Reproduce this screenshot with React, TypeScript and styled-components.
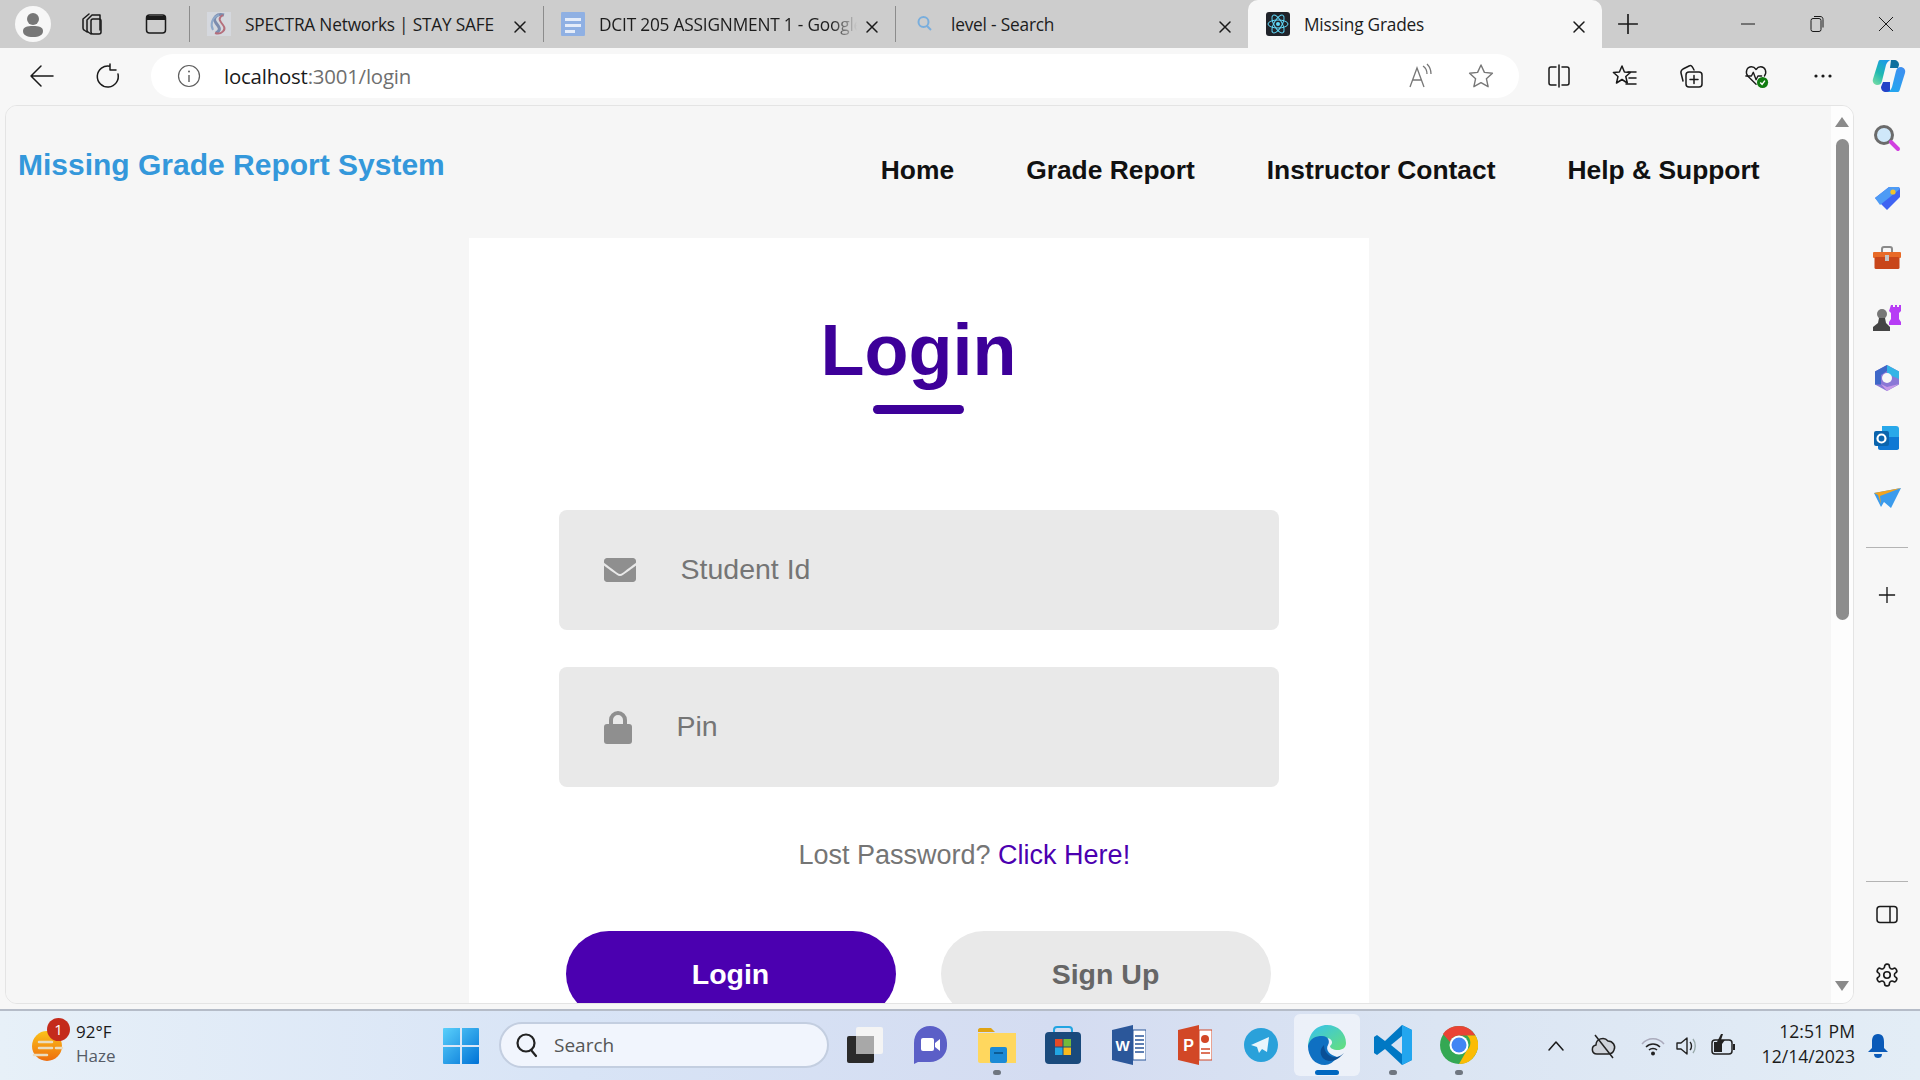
import React from "react";
import styled, { createGlobalStyle } from "styled-components";
import { FaEnvelope } from "react-icons/fa";

const GlobalStyle = createGlobalStyle`
  html, body {
    margin: 0;
    padding: 0;
    overflow: hidden;
  }
  body {
    font-family: "Open Sans", "Noto Sans", sans-serif;
  }
`;

const Screen = styled.div`
  width: 1920px;
  height: 1080px;
  display: flex;
  flex-direction: column;
  overflow: hidden;
  background: #f7f7f7;
`;

/* browser tab strip */
const TabStrip = styled.div`
  height: 48px;
  flex: none;
  display: flex;
  align-items: center;
  background: #cdcdcd;
  padding-left: 15px;
`;

const ProfileBadge = styled.div`
  width: 36px;
  height: 36px;
  border-radius: 50%;
  background: #f7f7f7;
  display: flex;
  align-items: center;
  justify-content: center;
  flex: none;
`;

const StripButton = styled.div<{ $left: number }>`
  margin-left: ${(p) => p.$left}px;
  width: 26px;
  height: 26px;
  flex: none;
  display: flex;
  align-items: center;
  justify-content: center;
`;

const TabList = styled.div`
  margin-left: 20px;
  display: flex;
  height: 48px;
  align-items: center;
  flex: none;
`;

const Tab = styled.div<{ $width: number; $active?: boolean; $divider?: boolean }>`
  width: ${(p) => p.$width}px;
  height: ${(p) => (p.$active ? "48px" : "36px")};
  display: flex;
  align-items: center;
  padding: 0 16px 0 17px;
  box-sizing: border-box;
  flex: none;
  background: ${(p) => (p.$active ? "#f7f7f7" : "transparent")};
  border-radius: ${(p) => (p.$active ? "10px 10px 0 0" : "0")};
  border-left: ${(p) => (p.$divider ? "1px solid #8c8c8c" : "1px solid transparent")};
`;

const TabIcon = styled.div`
  width: 24px;
  height: 24px;
  flex: none;
  display: flex;
  align-items: center;
  justify-content: center;
`;

const TabTitle = styled.span<{ $fade?: boolean }>`
  margin-left: 14px;
  flex: 1;
  min-width: 0;
  font-size: 17.3px;
  letter-spacing: -0.2px;
  color: #1c1c1c;
  white-space: nowrap;
  overflow: hidden;
  mask-image: ${(p) => (p.$fade ? "linear-gradient(to right, #000 90%, transparent)" : "none")};
`;

const TabClose = styled.div`
  width: 14px;
  height: 14px;
  flex: none;
  margin-left: 8px;
`;

const WindowControls = styled.div`
  margin-left: auto;
  display: flex;
  align-items: center;
  height: 48px;
`;

const WindowButton = styled.div`
  width: 69px;
  display: flex;
  justify-content: center;
  align-items: center;
`;

/* toolbar with the address bar */
const ToolBar = styled.div`
  height: 57px;
  flex: none;
  display: flex;
  align-items: center;
  padding-bottom: 2px;
  box-sizing: border-box;
  background: #f7f7f7;
`;

const NavButton = styled.div<{ $left: number }>`
  margin-left: ${(p) => p.$left}px;
  width: 28px;
  height: 28px;
  flex: none;
  display: flex;
  align-items: center;
  justify-content: center;
`;

const AddressBar = styled.div`
  margin-left: 29px;
  width: 1368px;
  height: 44px;
  background: #ffffff;
  border-radius: 22px;
  display: flex;
  align-items: center;
  padding: 0 25px 0 26px;
  box-sizing: border-box;
  flex: none;
`;

const Url = styled.span`
  margin-left: 23px;
  font-size: 20.4px;
  letter-spacing: -0.2px;
  color: #1a1a1a;
  flex: 1;
`;

const UrlRest = styled.span`
  color: #6f6f6f;
`;

const AddressActions = styled.div`
  display: flex;
  gap: 34px;
  align-items: center;
`;

const ToolIcons = styled.div`
  margin-left: 27px;
  display: flex;
  align-items: center;
  gap: 40px;
`;

const ToolIcon = styled.div`
  width: 26px;
  height: 26px;
  flex: none;
  display: flex;
  align-items: center;
  justify-content: center;
`;

/* page area and browser sidebar */
const Middle = styled.div`
  height: 899px;
  flex: none;
  display: flex;
  background: #f7f7f7;
`;

const Viewport = styled.div`
  margin-left: 5px;
  width: 1849px;
  height: 899px;
  box-sizing: border-box;
  flex: none;
  display: flex;
  overflow: hidden;
  border: 1px solid #e4e4e4;
  border-radius: 12px;
`;

const Page = styled.div`
  flex: 1;
  min-width: 0;
  background: #f6f6f6;
  font-family: "Liberation Sans", Arial, sans-serif;
`;

const SiteHeader = styled.header`
  height: 132px;
  display: flex;
  align-items: flex-start;
  padding-left: 12px;
`;

const SiteLogo = styled.div`
  margin-top: 39px;
  font-size: 30px;
  line-height: 40px;
  font-weight: 700;
  color: #3498db;
  white-space: nowrap;
`;

const SiteNav = styled.nav`
  margin-left: 436px;
  margin-top: 46px;
  display: flex;
  gap: 72px;
`;

const SiteLink = styled.a`
  font-size: 26.4px;
  line-height: 36px;
  font-weight: 700;
  color: #111111;
  white-space: nowrap;
`;

const Card = styled.main`
  width: 900px;
  height: 900px;
  margin: 0 auto;
  background: #ffffff;
  padding: 74px 90px 0;
  box-sizing: border-box;
`;

const Title = styled.h1`
  margin: 0;
  text-align: center;
  font-size: 72px;
  line-height: 76px;
  font-weight: 700;
  color: #3d0099;
`;

const TitleRule = styled.div`
  width: 91px;
  height: 9px;
  margin: 17px auto 0;
  background: #3d0099;
  border-radius: 5px;
`;

const Field = styled.label<{ $top: number }>`
  margin-top: ${(p) => p.$top}px;
  height: 120px;
  background: #e9e9e9;
  border-radius: 8px;
  display: flex;
  align-items: center;
  padding-left: 45px;
  color: #8f8f8f;
`;

const FieldIcon = styled.span<{ $gap: number }>`
  display: flex;
  margin-right: ${(p) => p.$gap}px;
`;

const FieldInput = styled.input`
  flex: 1;
  min-width: 0;
  border: 0;
  outline: 0;
  background: transparent;
  padding: 0;
  margin-top: -1px;
  font-family: inherit;
  font-size: 28.5px;
  color: #333333;
  &::placeholder {
    color: #757575;
    opacity: 1;
  }
`;

const LostPassword = styled.p`
  margin: 50px 0 0 240px;
  font-size: 27px;
  line-height: 36px;
  color: #757575;
  white-space: nowrap;
`;

const LostLink = styled.a`
  color: #4b00b0;
`;

const ButtonRow = styled.div`
  margin: 58px 8px 0 7px;
  display: flex;
  justify-content: space-between;
`;

const PillButton = styled.button<{ $primary?: boolean }>`
  width: 330px;
  height: 86px;
  border: 0;
  border-radius: 60px;
  font-family: inherit;
  font-size: 28.5px;
  font-weight: 700;
  background: ${(p) => (p.$primary ? "#4b00b0" : "#e9e9e9")};
  color: ${(p) => (p.$primary ? "#ffffff" : "#666666")};
`;

const ScrollTrack = styled.div`
  width: 22px;
  flex: none;
  background: #fdfdfd;
  display: flex;
  flex-direction: column;
  align-items: center;
`;

const ArrowUp = styled.div`
  margin-top: 11px;
  border-left: 7px solid transparent;
  border-right: 7px solid transparent;
  border-bottom: 10px solid #8a8a8a;
`;

const ScrollThumb = styled.div`
  margin-top: 12px;
  width: 13px;
  height: 481px;
  border-radius: 7px;
  background: #8d8d8d;
`;

const ArrowDown = styled.div`
  margin-top: auto;
  margin-bottom: 12px;
  border-left: 7px solid transparent;
  border-right: 7px solid transparent;
  border-top: 10px solid #8a8a8a;
`;

const Sidebar = styled.aside`
  width: 66px;
  flex: none;
  display: flex;
  flex-direction: column;
  align-items: center;
  padding-top: 19px;
  box-sizing: border-box;
`;

const SideIcon = styled.div`
  width: 28px;
  height: 28px;
  margin-bottom: 32px;
  flex: none;
  display: flex;
  align-items: center;
  justify-content: center;
`;

const SideRule = styled.div<{ $top: number; $bottom: number }>`
  width: 42px;
  height: 1px;
  background: #b4b4b4;
  flex: none;
  margin-top: ${(p) => p.$top}px;
  margin-bottom: ${(p) => p.$bottom}px;
`;

const SideBottom = styled.div`
  margin-top: auto;
  margin-bottom: -17px;
  padding-bottom: 0;
  display: flex;
  flex-direction: column;
  align-items: center;
`;

const Gap = styled.div`
  height: 5px;
  flex: none;
  background: #f7f7f7;
`;

/* windows taskbar */
const Taskbar = styled.footer`
  height: 71px;
  flex: none;
  border-top: 2px solid #b5bcc8;
  box-sizing: border-box;
  background: linear-gradient(90deg, #e7f0f8 0%, #d8e4f6 30%, #d4dcf1 55%, #dbe5f3 75%, #e3edf6 100%);
  display: flex;
  align-items: center;
`;

const Weather = styled.div`
  width: 440px;
  margin-left: 28px;
  flex: none;
  display: flex;
  align-items: center;
`;

const WeatherIcon = styled.div`
  position: relative;
  width: 36px;
  height: 40px;
  flex: none;
`;

const AlertBadge = styled.span`
  position: absolute;
  top: -8px;
  right: -6px;
  width: 23px;
  height: 23px;
  border-radius: 50%;
  background: #c42b1c;
  color: #fff;
  font-size: 15px;
  line-height: 23px;
  text-align: center;
`;

const WeatherText = styled.div`
  margin-left: 12px;
  margin-top: -4px;
  font-size: 17px;
  line-height: 24px;
  color: #1b1b1b;
`;

const WeatherSub = styled.div`
  color: #555b66;
`;

const StartSlot = styled.div`
  margin-left: -25px;
  width: 36px;
  height: 36px;
  flex: none;
`;

const SearchPill = styled.div`
  margin-left: 20px;
  margin-top: -2px;
  width: 330px;
  height: 46px;
  box-sizing: border-box;
  background: #f1f5fd;
  border: 2px solid #c3cee0;
  border-radius: 23px;
  display: flex;
  align-items: center;
  padding-left: 14px;
  flex: none;
`;

const SearchLabel = styled.span`
  margin-left: 15px;
  font-size: 19px;
  color: #555;
`;

const AppRow = styled.div`
  margin-left: 5px;
  margin-top: -2px;
  display: flex;
  align-items: center;
  flex: none;
`;

const AppSlot = styled.div<{ $active?: boolean; $width?: number }>`
  position: relative;
  width: ${(p) => p.$width ?? 66}px;
  height: 62px;
  display: flex;
  align-items: center;
  justify-content: center;
  border-radius: 6px;
  background: ${(p) => (p.$active ? "rgba(255,255,255,0.5)" : "transparent")};
`;

const AppDot = styled.span<{ $active?: boolean }>`
  position: absolute;
  bottom: 1px;
  left: 50%;
  transform: translateX(-50%);
  width: ${(p) => (p.$active ? "24px" : "8px")};
  height: 5px;
  border-radius: 3px;
  background: ${(p) => (p.$active ? "#0067c0" : "#6f7680")};
`;

const Tray = styled.div`
  margin-left: auto;
  display: flex;
  align-items: center;
  padding-right: 28px;
`;

const TrayIcon = styled.div<{ $gap: number }>`
  margin-left: ${(p) => p.$gap}px;
  width: 28px;
  height: 28px;
  display: flex;
  align-items: center;
  justify-content: center;
  flex: none;
`;

const Clock = styled.div`
  margin-left: 24px;
  margin-top: -4px;
  text-align: right;
  font-size: 17.6px;
  line-height: 25px;
  color: #1b1b1b;
  white-space: nowrap;
`;

const BellSlot = styled.div`
  margin-left: 9px;
  width: 28px;
  display: flex;
  justify-content: center;
`;

/* drawings */
const line = { fill: "none", stroke: "#1a1a1a", strokeWidth: 1.5, strokeLinecap: "round", strokeLinejoin: "round" } as const;

const CloseGlyph = () => (
  <svg width="14" height="14" viewBox="0 0 14 14">
    <path d="M2 2l10 10M12 2L2 12" {...line} />
  </svg>
);

const ProfileGlyph = () => (
  <svg width="26" height="26" viewBox="0 0 26 26">
    <circle cx="13" cy="8" r="6" fill="#777" />
    <path d="M3 20c0-4 4-5 10-5s10 1 10 5-4 6-10 6-10-2-10-6z" fill="#777" />
  </svg>
);

const WorkspacesGlyph = () => (
  <svg width="26" height="26" viewBox="0 0 26 26">
    <path d="M8 21l-3-2c-1-.6-1-1-1-2V8l6-5M12 23l-3-2c-1-.6-1-1-1-2V9l5-5h8v15" {...line} />
    <rect x="12" y="8" width="10" height="15" rx="2" {...line} />
  </svg>
);

const VerticalTabsGlyph = () => (
  <svg width="24" height="24" viewBox="0 0 24 24">
    <rect x="2.5" y="3" width="19" height="18" rx="3" {...line} />
    <path d="M3 4h18v4H3z" fill="#1a1a1a" />
  </svg>
);

const SpectraIcon = () => (
  <svg width="24" height="24" viewBox="0 0 24 24">
    <rect width="24" height="24" fill="#d5d8de" />
    <path d="M17 3c-7-2-12 3-8 8s5 7 0 10" fill="none" stroke="#7c8cae" strokeWidth="3" />
    <path d="M8 21c6 2 12-3 8-8s-5-7 0-10" fill="none" stroke="#b56f7c" strokeWidth="2" />
    <path d="M12 3C5 5 3 12 6 18" fill="none" stroke="#8fa8c9" strokeWidth="2" />
  </svg>
);

const DocsIcon = () => (
  <svg width="24" height="24" viewBox="0 0 24 24">
    <rect width="24" height="26" y="-1" rx="3" fill="#8fb0e3" />
    <path d="M4 6h16v3H4zM4 12h16v3H4zM4 18h10v3H4z" fill="#e4ecf9" />
  </svg>
);

const SearchTabIcon = () => (
  <svg width="20" height="20" viewBox="0 0 20 20">
    <circle cx="8.5" cy="8" r="5" fill="none" stroke="#79aedd" strokeWidth="2" />
    <path d="M12 12l4 4" stroke="#79aedd" strokeWidth="2" />
  </svg>
);

const ReactIcon = () => (
  <svg width="24" height="24" viewBox="0 0 24 24">
    <rect width="24" height="24" rx="3" fill="#20232a" />
    <circle cx="12" cy="12" r="2" fill="#61dafb" />
    <g fill="none" stroke="#61dafb" strokeWidth="1">
      <ellipse cx="12" cy="12" rx="10" ry="4" />
      <ellipse cx="12" cy="12" rx="10" ry="4" transform="rotate(60 12 12)" />
      <ellipse cx="12" cy="12" rx="10" ry="4" transform="rotate(120 12 12)" />
    </g>
  </svg>
);

const PlusGlyph = ({ size }: { size: number }) => (
  <svg width={size} height={size} viewBox="0 0 20 20">
    <path d="M10 1v18M1 10h18" {...line} strokeLinecap="butt" />
  </svg>
);

const MinimizeGlyph = () => (
  <svg width="16" height="16" viewBox="0 0 16 16">
    <path d="M1 8h14" stroke="#1a1a1a" strokeWidth="1" />
  </svg>
);

const RestoreGlyph = () => (
  <svg width="16" height="18" viewBox="0 0 16 18">
    <rect x="2" y="3.5" width="10" height="13" rx="2" fill="none" stroke="#1a1a1a" strokeWidth="1" />
    <path d="M5 1.5h6c2 0 3 1 3 3v8" fill="none" stroke="#1a1a1a" strokeWidth="1" />
  </svg>
);

const WindowCloseGlyph = () => (
  <svg width="16" height="16" viewBox="0 0 16 16">
    <path d="M1 1l14 14M15 1L1 15" stroke="#1a1a1a" strokeWidth="1" />
  </svg>
);

const BackGlyph = () => (
  <svg width="26" height="26" viewBox="0 0 26 26">
    <path d="M24 13H2M12 3L2 13l10 10" {...line} />
  </svg>
);

const RefreshGlyph = () => (
  <svg width="26" height="26" viewBox="0 0 26 26">
    <path d="M15 3.2A10.5 10.5 0 1 0 23 11M15 1v6h6" {...line} />
  </svg>
);

const InfoGlyph = () => (
  <svg width="24" height="24" viewBox="0 0 24 24">
    <circle cx="12" cy="12" r="10.5" fill="none" stroke="#5e5e5e" strokeWidth="1.2" />
    <path d="M12 11v7" stroke="#5e5e5e" strokeWidth="1.4" />
    <circle cx="12" cy="7.5" r="1" fill="#5e5e5e" />
  </svg>
);

const ReadAloudGlyph = () => (
  <svg width="26" height="26" viewBox="0 0 26 26">
    <path d="M2 24L9 5l7 19M5 17h8" fill="none" stroke="#777" strokeWidth="1.3" />
    <path d="M15 3c3 2 4 5 4 8M19 1c3 3 4 6 4 10" fill="none" stroke="#777" strokeWidth="1.3" />
  </svg>
);

const StarGlyph = () => (
  <svg width="26" height="26" viewBox="0 0 26 26">
    <path d="M13 2l3.4 7.4 8 .9-6 5.4 1.7 8L13 19.7l-7.1 4 1.7-8-6-5.4 8-.9z" fill="none" stroke="#777" strokeWidth="1.4" strokeLinejoin="round" />
  </svg>
);

const SplitGlyph = () => (
  <svg width="26" height="26" viewBox="0 0 26 26">
    <path d="M10 4H5c-1.5 0-2 1-2 2v14c0 1 .5 2 2 2h5M16 4h5c1.5 0 2 1 2 2v14c0 1-.5 2-2 2h-5M13 2v22" {...line} />
  </svg>
);

const FavoritesGlyph = () => (
  <svg width="26" height="26" viewBox="0 0 26 26">
    <path d="M10 3l2.4 6 6 .5-4.600 4 1.500 6.500-5.300-3.500L4.500 20 6 13.500l-4.600-4 6-.5z" {...line} />
    <path d="M16 9h8M17 15h7M14 21h10" {...line} />
  </svg>
);

const CollectionsGlyph = () => (
  <svg width="26" height="26" viewBox="0 0 26 26">
    <path d="M5 18L3 10c-.5-2 .5-3 2-4l6-3c2-1 3 0 4 2l1 2" {...line} />
    <rect x="8" y="9" width="16" height="15" rx="3" {...line} />
    <path d="M16 12.500v8M12 16.500h8" {...line} />
  </svg>
);

const HealthGlyph = () => (
  <svg width="28" height="28" viewBox="0 0 28 28">
    <path d="M13 23L4 14C1 10 3 4 8 4c3 0 5 3 5 3s2-3 5-3c5 0 7 6 4 10" {...line} />
    <path d="M2 14h6l2-4 3 8 2-4h4" {...line} />
    <circle cx="20" cy="21" r="6" fill="#107c10" />
    <path d="M17.500 21l2 2 3-4" fill="none" stroke="#fff" strokeWidth="1.5" />
  </svg>
);

const MoreGlyph = () => (
  <svg width="22" height="6" viewBox="0 0 22 6">
    <circle cx="4" cy="3" r="1.6" fill="#1a1a1a" />
    <circle cx="11" cy="3" r="1.6" fill="#1a1a1a" />
    <circle cx="18" cy="3" r="1.6" fill="#1a1a1a" />
  </svg>
);

const CopilotGlyph = () => (
  <svg width="34" height="34" viewBox="0 0 34 34" style={{ flex: "none" }}>
    <defs>
      <linearGradient id="cpLeft" x1="0" y1="1" x2="0.6" y2="0">
        <stop offset="0" stopColor="#7fe0a4" />
        <stop offset="0.5" stopColor="#20b9b0" />
        <stop offset="1" stopColor="#1c9be6" />
      </linearGradient>
      <linearGradient id="cpRight" x1="0.8" y1="0" x2="0.2" y2="1">
        <stop offset="0" stopColor="#3f8ff0" />
        <stop offset="1" stopColor="#21a8ef" />
      </linearGradient>
    </defs>
    <path d="M19 1h3c3 0 5 2 5 5l-1 3h-8z" fill="#0f6f9e" />
    <path d="M8 1h12c-3 0-5 2-6 5l-4 16c-1 3-2 4-5 4-3-.5-5-3-4-6L6 4c.5-2 1-3 2-3z" fill="url(#cpLeft)" />
    <path d="M9 28l2-5h7v10h-4c-3 0-5-2-5-5z" fill="#2443c8" />
    <path d="M26 33H14c3 0 5-2 6-5l4-16c1-3 2-4 5-4 3 .5 5 3 4 6l-5 16c-.5 2-1 3-2 3z" fill="url(#cpRight)" />
  </svg>
);

const MagnifierSide = () => (
  <svg width="28" height="28" viewBox="0 0 28 28">
    <circle cx="11" cy="11" r="8.5" fill="#cfe8fa" stroke="#6b6b6b" strokeWidth="3" />
    <path d="M18 18l7 7" stroke="#d13fe0" strokeWidth="4" strokeLinecap="round" />
  </svg>
);

const TagSide = () => (
  <svg width="26" height="26" viewBox="0 0 26 26">
    <path d="M15 2h9c1 0 2 1 2 2v8L13 25 1 13z" fill="#3f63f2" />
    <path d="M15 2h9c1 0 2 1 2 2L6 20l-5-7z" fill="#4e9bf5" />
    <circle cx="19" cy="7" r="2.6" fill="#f4c32a" />
  </svg>
);

const ToolboxSide = () => (
  <svg width="28" height="24" viewBox="0 0 28 24">
    <path d="M9 6V3c0-1 1-2 2-2h6c1 0 2 1 2 2v3" fill="none" stroke="#8a8a8a" strokeWidth="2" />
    <rect y="6" width="28" height="6" rx="1" fill="#e86a27" />
    <rect x="1.5" y="11" width="25" height="12" rx="1.5" fill="#c8461a" />
    <rect x="12" y="9" width="4" height="6" fill="#c4c4c4" />
  </svg>
);

const ChessSide = () => (
  <svg width="28" height="28" viewBox="0 0 28 28">
    <path d="M18 1h2v2h2V1h2v2h2V1h2v6l-2 2v6l2 3v3H16v-3l2-3V9l-2-2z" fill="#b73cf5" />
    <circle cx="9" cy="10" r="5" fill="#777" />
    <path d="M6 14h6l1 5 4 4v4H0v-4l5-4z" fill="#444" />
  </svg>
);

const M365Side = () => (
  <svg width="26" height="28" viewBox="0 0 26 28">
    <path d="M13 1l12 6.5v13L13 27 1 20.5v-13z" fill="#8a78d6" />
    <path d="M13 1l12 6.5V15l-7-3-5-3z" fill="#34b4e6" />
    <path d="M1 7.5L13 1v6L7 11v9.5L1 20.5z" fill="#3f68c8" />
    <path d="M7 20l6 3 12-3-12 7z" fill="#c79ae8" />
    <circle cx="13" cy="14" r="5" fill="#f7f7f7" />
  </svg>
);

const OutlookSide = () => (
  <svg width="26" height="26" viewBox="0 0 26 26">
    <path d="M8 1h14c2 0 3 1 3 3v20H8z" fill="#28a8ea" />
    <path d="M4 12l21 0v11c0 1-1 2-2 2H6c-1 0-2-1-2-2z" fill="#0f78d4" />
    <rect y="6" width="15" height="15" rx="2" fill="#0a64ad" />
    <circle cx="7.5" cy="13.5" r="4" fill="none" stroke="#fff" strokeWidth="2.2" />
  </svg>
);

const PlaneSide = () => (
  <svg width="28" height="22" viewBox="0 0 28 22">
    <path d="M1 6l27-5-10 20-7-6-3 5z" fill="#3b9bec" />
    <path d="M1 6l27-5L7 9l1 8-3-9z" fill="#f2a31f" />
  </svg>
);

const PanelGlyph = () => (
  <svg width="22" height="20" viewBox="0 0 22 20">
    <rect x="1" y="1.5" width="20" height="16" rx="3" {...line} />
    <path d="M14 2v15" {...line} />
  </svg>
);

const GearGlyph = () => (
  <svg width="26" height="26" viewBox="0 0 24 24" fill="none" stroke="#1a1a1a" strokeWidth="1.5" strokeLinejoin="round">
    <path d="M12.22 2h-.44a2 2 0 0 0-2 2v.18a2 2 0 0 1-1 1.73l-.43.25a2 2 0 0 1-2 0l-.15-.08a2 2 0 0 0-2.73.73l-.22.38a2 2 0 0 0 .73 2.73l.15.1a2 2 0 0 1 1 1.72v.51a2 2 0 0 1-1 1.74l-.15.09a2 2 0 0 0-.73 2.73l.22.38a2 2 0 0 0 2.73.73l.15-.08a2 2 0 0 1 2 0l.43.25a2 2 0 0 1 1 1.73V20a2 2 0 0 0 2 2h.44a2 2 0 0 0 2-2v-.18a2 2 0 0 1 1-1.73l.43-.25a2 2 0 0 1 2 0l.15.08a2 2 0 0 0 2.73-.73l.22-.39a2 2 0 0 0-.73-2.73l-.15-.08a2 2 0 0 1-1-1.74v-.5a2 2 0 0 1 1-1.74l.15-.09a2 2 0 0 0 .73-2.73l-.22-.38a2 2 0 0 0-2.73-.73l-.15.08a2 2 0 0 1-2 0l-.43-.25a2 2 0 0 1-1-1.73V4a2 2 0 0 0-2-2z" />
    <circle cx="12" cy="12" r="3" />
  </svg>
);

const LockGlyph = () => (
  <svg width="28" height="33" viewBox="0 0 28 33">
    <path d="M7 14V9a7 7 0 0 1 14 0v5" fill="none" stroke="currentColor" strokeWidth="4" />
    <path d="M3 13h22c2 0 3 1 3 3v14c0 2-1 3-3 3H3c-2 0-3-1-3-3V16c0-2 1-3 3-3z" fill="currentColor" />
  </svg>
);

const HazeIcon = () => (
  <svg width="36" height="40" viewBox="0 0 36 40">
    <defs>
      <linearGradient id="hz" x1="0" y1="0" x2="0" y2="1">
        <stop offset="0" stopColor="#fbc31a" />
        <stop offset="1" stopColor="#ee6d0e" />
      </linearGradient>
    </defs>
    <circle cx="19" cy="20" r="15" fill="url(#hz)" />
    <path d="M11 16h13M11 22h13M28 22h6M6 29h13" stroke="#e9dcc0" strokeWidth="2.5" strokeLinecap="round" />
  </svg>
);

const StartIcon = () => (
  <svg width="36" height="36" viewBox="0 0 36 36">
    <defs>
      <linearGradient id="st" x1="0" y1="0" x2="1" y2="1">
        <stop offset="0" stopColor="#5ad0fb" />
        <stop offset="1" stopColor="#0072d6" />
      </linearGradient>
    </defs>
    <path d="M0 1a1 1 0 0 1 1-1h16v17H0zM19 0h16a1 1 0 0 1 1 1v16H19zM0 19h17v17H1a1 1 0 0 1-1-1zM19 19h17v16a1 1 0 0 1-1 1H19z" fill="url(#st)" />
  </svg>
);

const SearchGlass = () => (
  <svg width="24" height="26" viewBox="0 0 24 26">
    <circle cx="11" cy="11" r="8.5" fill="none" stroke="#222" strokeWidth="2.2" />
    <path d="M16 18l5 6" stroke="#222" strokeWidth="2.2" strokeLinecap="round" />
  </svg>
);

const TaskViewIcon = () => (
  <svg width="36" height="36" viewBox="0 0 36 36">
    <rect x="9" y="0" width="27" height="27" rx="2" fill="#f4f4f4" />
    <rect y="9" width="27" height="27" rx="2" fill="#2a2a2a" />
    <rect x="9" y="9" width="18" height="18" fill="#a8a8a8" />
  </svg>
);

const MeetIcon = () => (
  <svg width="36" height="40" viewBox="0 0 36 40">
    <path d="M18 1c9 0 17 7 17 17v3c0 9-8 16-17 16H6l-4 2V18C2 8 9 1 18 1z" fill="#5b5fc7" />
    <rect x="9" y="13" width="13" height="13" rx="2" fill="#fff" />
    <path d="M23 18l5-4v12l-5-4z" fill="#fff" />
  </svg>
);

const ExplorerIcon = () => (
  <svg width="38" height="36" viewBox="0 0 38 36">
    <path d="M0 3c0-1 1-2 2-2h11l4 4H0z" fill="#e0a313" />
    <path d="M0 6h38v30H2c-1 0-2-1-2-2z" fill="#ffd75e" />
    <rect x="12" y="20" width="17" height="16" rx="2" fill="#1b8ad6" />
    <path d="M16 26h9" stroke="#0b5c96" strokeWidth="2" />
  </svg>
);

const StoreIcon = () => (
  <svg width="36" height="38" viewBox="0 0 36 38">
    <path d="M9 7V4c0-2 1-3 3-3h12c2 0 3 1 3 3v3" fill="none" stroke="#22a5e2" strokeWidth="2" />
    <rect y="6" width="36" height="32" rx="4" fill="#1a4a7c" />
    <path d="M10 13h7.5v7.5H10z" fill="#e34a26" />
    <path d="M18.5 13H26v7.5h-7.500z" fill="#73ba3a" />
    <path d="M10 21.5h7.5V29H10z" fill="#22a5e2" />
    <path d="M18.5 21.5H26V29h-7.500z" fill="#f7b91d" />
  </svg>
);

const WordIcon = () => (
  <svg width="34" height="40" viewBox="0 0 34 40">
    <path d="M0 5L21 0v40L0 35z" fill="#2b579a" />
    <rect x="21" y="5" width="13" height="30" fill="#fff" stroke="#2b579a" />
    <path d="M23 11h9M23 15h9M23 19h9M23 23h9M23 27h9" stroke="#2b579a" strokeWidth="1.5" />
    <text x="10.5" y="26" fontFamily="Liberation Sans" fontWeight="700" fontSize="15" fill="#fff" textAnchor="middle">W</text>
  </svg>
);

const PowerPointIcon = () => (
  <svg width="34" height="40" viewBox="0 0 34 40">
    <path d="M0 5L21 0v40L0 35z" fill="#d24726" />
    <rect x="21" y="5" width="13" height="30" fill="#fff" stroke="#d24726" />
    <circle cx="27" cy="14" r="4" fill="#d24726" />
    <path d="M23 24h9M23 28h9" stroke="#d24726" strokeWidth="1.5" />
    <text x="10.5" y="26" fontFamily="Liberation Sans" fontWeight="700" fontSize="16" fill="#fff" textAnchor="middle">P</text>
  </svg>
);

const TelegramIcon = () => (
  <svg width="34" height="34" viewBox="0 0 34 34">
    <circle cx="17" cy="17" r="17" fill="#2aa1da" />
    <path d="M25 9L7 17l6 2 2 6 3-4 5 3z" fill="#e8f5fc" />
  </svg>
);

const EdgeIcon = () => (
  <svg width="40" height="42" viewBox="0 0 40 42">
    <defs>
      <linearGradient id="edA" x1="0" y1="0" x2="1" y2="1">
        <stop offset="0" stopColor="#35c1f1" />
        <stop offset="1" stopColor="#66e07a" />
      </linearGradient>
    </defs>
    <path d="M20 1c11 0 19 8 19 18 0 5-4 7-8 7-5 0-8-2-8-4 4-3 2-8-4-8C8 14 3 20 1 24 1 10 9 1 20 1z" fill="url(#edA)" />
    <path d="M1 22C3 14 9 12 15 12c7 0 8 6 6 9-3 5 2 10 9 12-3 5-8 8-12 8C8 41 1 33 1 22z" fill="#0f70c2" />
    <path d="M17 21c0 8 6 13 13 12 3-1 5-2 7-4-5 6-13 11-20 6-4-3-5-10 0-14z" fill="#0a4f96" />
  </svg>
);

const VsCodeIcon = () => (
  <svg width="38" height="40" viewBox="0 0 38 40">
    <path d="M28 0l10 5v30l-10 5L11 24 3 30l-3-2V12l3-2 8 6z" fill="#0078c4" />
    <path d="M28 0l10 5v30l-10 5z" fill="#23a6ef" />
    <path d="M28 11L17 20l11 9z" fill="#d7e2f3" />
  </svg>
);

const ChromeIcon = () => (
  <svg width="38" height="40" viewBox="0 0 38 38">
    <circle cx="19" cy="19" r="19" fill="#34a853" />
    <path d="M19 0a19 19 0 0 1 16.5 9.5H19a9.5 9.5 0 0 0-9 6.5L3 8A19 19 0 0 1 19 0z" fill="#ea4335" />
    <path d="M35.5 9.500A19 19 0 0 1 19 38l8-14a9.5 9.5 0 0 0 0-14.500z" fill="#fbbc05" />
    <circle cx="19" cy="19" r="9.5" fill="#fff" />
    <circle cx="19" cy="19" r="7.5" fill="#4285f4" />
  </svg>
);

const CaretGlyph = () => (
  <svg width="18" height="12" viewBox="0 0 18 12">
    <path d="M2 10l7-8 7 8" {...line} />
  </svg>
);

const CloudOffGlyph = () => (
  <svg width="26" height="26" viewBox="0 0 26 26">
    <path d="M6 21c-6 0-6-8-1-9 0-6 8-9 12-4 5 0 8 5 6 9-1 3-3 4-6 4z" fill="#cfd3da" stroke="#222" strokeWidth="1.5" />
    <path d="M4 2l18 23" stroke="#222" strokeWidth="1.5" />
  </svg>
);

const WifiGlyph = () => (
  <svg width="24" height="22" viewBox="0 0 24 22">
    <path d="M1 9c6-7 16-7 22 0" fill="none" stroke="#aab" strokeWidth="1.5" />
    <path d="M5 12c4-4 10-4 14 0M8 15c2-2 6-2 8 0" fill="none" stroke="#222" strokeWidth="1.5" />
    <circle cx="12" cy="18.5" r="2" fill="#222" />
  </svg>
);

const VolumeGlyph = () => (
  <svg width="24" height="24" viewBox="0 0 24 24">
    <path d="M2 9h4l6-5v16l-6-5H2z" fill="none" stroke="#222" strokeWidth="1.4" strokeLinejoin="round" />
    <path d="M15 8c2 2 2 6 0 8" fill="none" stroke="#222" strokeWidth="1.4" />
    <path d="M18 5c3 4 3 10 0 14" fill="none" stroke="#9aa" strokeWidth="1.4" />
  </svg>
);

const BatteryGlyph = () => (
  <svg width="26" height="24" viewBox="0 0 26 24">
    <rect x="1" y="6" width="20" height="14" rx="3" fill="none" stroke="#222" strokeWidth="1.5" />
    <rect x="3" y="8" width="8" height="10" fill="#222" />
    <path d="M22 10h2v6h-2z" fill="#222" />
    <path d="M10 0L6 8h4l-2 6 6-8h-4l2-6z" fill="#222" />
  </svg>
);

const BellGlyph = () => (
  <svg width="22" height="26" viewBox="0 0 22 26">
    <path d="M11 1c5 0 6 4 6 8v6l4 4H1l4-4V9c0-4 1-8 6-8z" fill="#0a5ab8" />
    <path d="M7 21h8c0 3-2 4-4 4s-4-1-4-4z" fill="#0a5ab8" />
  </svg>
);

const LoginPage: React.FC = () => (
  <Page>
    <SiteHeader>
      <SiteLogo>Missing Grade Report System</SiteLogo>
      <SiteNav>
        <SiteLink>Home</SiteLink>
        <SiteLink>Grade Report</SiteLink>
        <SiteLink>Instructor Contact</SiteLink>
        <SiteLink>Help &amp; Support</SiteLink>
      </SiteNav>
    </SiteHeader>
    <Card>
      <Title>Login</Title>
      <TitleRule />
      <Field $top={96}>
        <FieldIcon $gap={45}>
          <FaEnvelope size={32} />
        </FieldIcon>
        <FieldInput placeholder="Student Id" />
      </Field>
      <Field $top={37}>
        <FieldIcon $gap={45}>
          <LockGlyph />
        </FieldIcon>
        <FieldInput placeholder="Pin" />
      </Field>
      <LostPassword>
        Lost Password? <LostLink>Click Here!</LostLink>
      </LostPassword>
      <ButtonRow>
        <PillButton $primary>Login</PillButton>
        <PillButton>Sign Up</PillButton>
      </ButtonRow>
    </Card>
  </Page>
);

const App: React.FC = () => (
  <>
    <GlobalStyle />
    <Screen>
      <TabStrip>
        <ProfileBadge>
          <ProfileGlyph />
        </ProfileBadge>
        <StripButton $left={28}>
          <WorkspacesGlyph />
        </StripButton>
        <StripButton $left={38}>
          <VerticalTabsGlyph />
        </StripButton>
        <TabList>
          <Tab $width={354} $divider>
            <TabIcon>
              <SpectraIcon />
            </TabIcon>
            <TabTitle>SPECTRA Networks | STAY SAFE</TabTitle>
            <TabClose>
              <CloseGlyph />
            </TabClose>
          </Tab>
          <Tab $width={352} $divider>
            <TabIcon>
              <DocsIcon />
            </TabIcon>
            <TabTitle $fade>DCIT 205 ASSIGNMENT 1 - Google Docs</TabTitle>
            <TabClose>
              <CloseGlyph />
            </TabClose>
          </Tab>
          <Tab $width={353} $divider>
            <TabIcon>
              <SearchTabIcon />
            </TabIcon>
            <TabTitle>level - Search</TabTitle>
            <TabClose>
              <CloseGlyph />
            </TabClose>
          </Tab>
          <Tab $width={354} $active>
            <TabIcon>
              <ReactIcon />
            </TabIcon>
            <TabTitle>Missing Grades</TabTitle>
            <TabClose>
              <CloseGlyph />
            </TabClose>
          </Tab>
        </TabList>
        <StripButton $left={13}>
          <PlusGlyph size={22} />
        </StripButton>
        <WindowControls>
          <WindowButton>
            <MinimizeGlyph />
          </WindowButton>
          <WindowButton>
            <RestoreGlyph />
          </WindowButton>
          <WindowButton>
            <WindowCloseGlyph />
          </WindowButton>
        </WindowControls>
      </TabStrip>

      <ToolBar>
        <NavButton $left={28}>
          <BackGlyph />
        </NavButton>
        <NavButton $left={38}>
          <RefreshGlyph />
        </NavButton>
        <AddressBar>
          <InfoGlyph />
          <Url>
            localhost<UrlRest>:3001/login</UrlRest>
          </Url>
          <AddressActions>
            <ReadAloudGlyph />
            <StarGlyph />
          </AddressActions>
        </AddressBar>
        <ToolIcons>
          <ToolIcon>
            <SplitGlyph />
          </ToolIcon>
          <ToolIcon>
            <FavoritesGlyph />
          </ToolIcon>
          <ToolIcon>
            <CollectionsGlyph />
          </ToolIcon>
          <ToolIcon>
            <HealthGlyph />
          </ToolIcon>
          <ToolIcon>
            <MoreGlyph />
          </ToolIcon>
          <ToolIcon>
            <CopilotGlyph />
          </ToolIcon>
        </ToolIcons>
      </ToolBar>

      <Middle>
        <Viewport>
          <LoginPage />
          <ScrollTrack>
            <ArrowUp />
            <ScrollThumb />
            <ArrowDown />
          </ScrollTrack>
        </Viewport>
        <Sidebar>
          <SideIcon>
            <MagnifierSide />
          </SideIcon>
          <SideIcon>
            <TagSide />
          </SideIcon>
          <SideIcon>
            <ToolboxSide />
          </SideIcon>
          <SideIcon>
            <ChessSide />
          </SideIcon>
          <SideIcon>
            <M365Side />
          </SideIcon>
          <SideIcon>
            <OutlookSide />
          </SideIcon>
          <SideIcon>
            <PlaneSide />
          </SideIcon>
          <SideRule $top={3} $bottom={33} />
          <SideIcon>
            <PlusGlyph size={18} />
          </SideIcon>
          <SideBottom>
            <SideRule $top={0} $bottom={19} />
            <SideIcon>
              <PanelGlyph />
            </SideIcon>
            <SideIcon>
              <GearGlyph />
            </SideIcon>
          </SideBottom>
        </Sidebar>
      </Middle>
      <Gap />

      <Taskbar>
        <Weather>
          <WeatherIcon>
            <HazeIcon />
            <AlertBadge>1</AlertBadge>
          </WeatherIcon>
          <WeatherText>
            92°F
            <WeatherSub>Haze</WeatherSub>
          </WeatherText>
        </Weather>
        <StartSlot>
          <StartIcon />
        </StartSlot>
        <SearchPill>
          <SearchGlass />
          <SearchLabel>Search</SearchLabel>
        </SearchPill>
        <AppRow>
          <AppSlot $width={62}>
            <TaskViewIcon />
          </AppSlot>
          <AppSlot $width={68}>
            <MeetIcon />
          </AppSlot>
          <AppSlot>
            <ExplorerIcon />
            <AppDot />
          </AppSlot>
          <AppSlot>
            <StoreIcon />
          </AppSlot>
          <AppSlot>
            <WordIcon />
          </AppSlot>
          <AppSlot>
            <PowerPointIcon />
          </AppSlot>
          <AppSlot>
            <TelegramIcon />
          </AppSlot>
          <AppSlot $active>
            <EdgeIcon />
            <AppDot $active />
          </AppSlot>
          <AppSlot>
            <VsCodeIcon />
            <AppDot />
          </AppSlot>
          <AppSlot>
            <ChromeIcon />
            <AppDot />
          </AppSlot>
        </AppRow>
        <Tray>
          <TrayIcon $gap={0}>
            <CaretGlyph />
          </TrayIcon>
          <TrayIcon $gap={20}>
            <CloudOffGlyph />
          </TrayIcon>
          <TrayIcon $gap={21}>
            <WifiGlyph />
          </TrayIcon>
          <TrayIcon $gap={6}>
            <VolumeGlyph />
          </TrayIcon>
          <TrayIcon $gap={9}>
            <BatteryGlyph />
          </TrayIcon>
          <Clock>
            12:51 PM
            <br />
            12/14/2023
          </Clock>
          <BellSlot>
            <BellGlyph />
          </BellSlot>
        </Tray>
      </Taskbar>
    </Screen>
  </>
);

export default App;
